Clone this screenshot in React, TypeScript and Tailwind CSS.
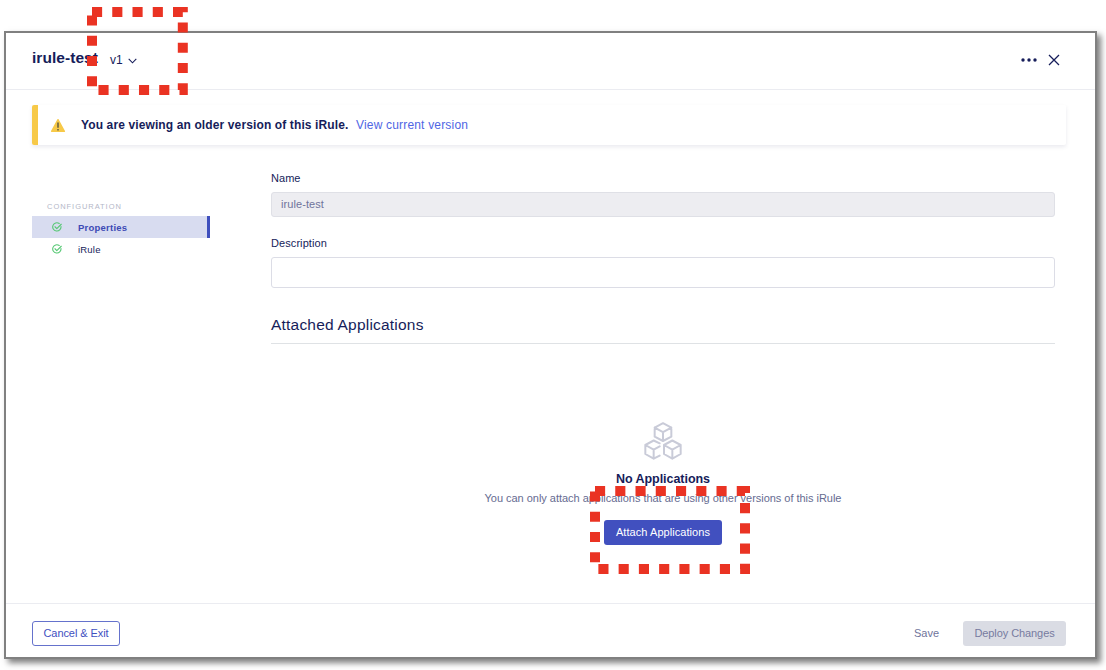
import React from "react";

function Callout({ className, width, height }: { className: string; width: number; height: number }) {
  return (
    <svg
      className={"pointer-events-none absolute " + className}
      width={width + 10}
      height={height + 10}
      fill="none"
    >
      <rect x="5" y="5" width={width} height={height} stroke="#ea3323" strokeWidth="10" strokeDasharray="10.125" />
    </svg>
  );
}

function CheckIcon() {
  return (
    <svg className="h-[10px] w-[10px] shrink-0" viewBox="0 0 20 20" fill="none" stroke="#55c873" strokeWidth="2.200">
      <path d="M18 9A8.300 8.300 0 1 1 14.500 3" strokeLinecap="round" />
      <path d="M6 9.500l3.600 3.700L18.500 4.500" strokeLinecap="round" strokeLinejoin="round" />
    </svg>
  );
}

function WarningIcon() {
  return (
    <svg className="mt-[1px] h-[15px] w-[16px]" viewBox="0 0 16 15">
      <path d="M8 1.700L14.400 13.300H1.600Z" fill="#f7c948" stroke="#f7c948" strokeWidth="1.400" strokeLinejoin="round" />
      <path d="M8 4.600v5.200M8 11v1.600" stroke="#4a4a3f" strokeWidth="1.300" />
    </svg>
  );
}

function CubesIcon() {
  return (
    <svg className="h-[38px] w-[38px]" viewBox="222 35 114 114" fill="none" stroke="#c9cbd8" strokeWidth="6" strokeLinejoin="round" strokeLinecap="round">
      <path d="M279 38.500L304 52V79L279 92L254 79V52ZM254 52L279 65.500L304 52M279 65.500V92" />
      <path d="M269 99L251 90.500L226 104V131L251 145L269 136M226 104L251 118L269 108M251 118V145" />
      <path d="M307 90.500L332 104V131L307 145L282 131V104ZM282 104L307 118L332 104M307 118V145" />
    </svg>
  );
}

export default function App() {
  return (
    <div className="relative h-[670px] w-[1106px] overflow-hidden bg-white pt-[31px] pl-1 font-['Liberation_Sans',Arial,sans-serif] text-[11px] text-[#161d5a]">
      <div className="flex h-[628px] w-[1093px] flex-col border-2 border-[#808080] bg-white shadow-[4px_4px_6px_rgba(0,0,0,0.5)]">
        <header className="flex h-[57px] shrink-0 items-center border-b border-[#ebecf1] pr-[35px] pb-[3px] pl-[26px]">
          <h1 className="mb-[4px] w-[67px] text-[15.500px] leading-5 font-bold tracking-[0.050px] whitespace-nowrap">irule-test</h1>
          <button className="ml-[11px] flex items-center gap-[5px] text-[12px] leading-4">
            <span>v1</span>
            <svg className="mt-[2px] h-[6px] w-[9px]" viewBox="0 0 9 6" fill="none" stroke="currentColor" strokeWidth="1.100">
              <path d="M0.700 0.900L4.500 4.800L8.300 0.900" />
            </svg>
          </button>
          <div className="ml-auto flex items-center gap-[11px]">
            <svg className="h-[4px] w-[16px]" viewBox="0 0 16 4" fill="currentColor">
              <circle cx="2" cy="2" r="1.700" />
              <circle cx="8" cy="2" r="1.700" />
              <circle cx="14" cy="2" r="1.700" />
            </svg>
            <svg className="h-[12px] w-[12px]" viewBox="0 0 12 12" fill="none" stroke="currentColor" strokeWidth="1.300">
              <path d="M1 1l10 10M11 1L1 11" />
            </svg>
          </div>
        </header>

        <div className="mt-[15px] mr-[29px] ml-[26px] flex h-[40px] shrink-0 items-center rounded-[2px] border-l-[6px] border-[#f7c948] pl-3 shadow-[0_2px_4px_rgba(20,25,80,0.09)]">
          <WarningIcon />
          <strong className="ml-[15px] w-[275px] text-[12px] leading-4 tracking-[0.120px] whitespace-nowrap">
            You are viewing an older version of this iRule.
          </strong>
          <a className="text-[12px] leading-4 tracking-[0.180px] whitespace-nowrap text-[#4f66e4]">View current version</a>
        </div>

        <main className="flex grow pr-[40px] pl-[26px]">
          <nav className="w-[178px] shrink-0 pt-[57px]">
            <div className="mb-[4px] pl-[15px] text-[7.500px] leading-[10px] font-medium tracking-[0.960px] text-[#b4b7c8]">CONFIGURATION</div>
            <div className="flex h-[22px] items-center border-r-[3px] border-[#3f4fbd] bg-[#d8dcf0] pl-[20px] text-[9.500px] font-bold text-[#3d4ab5]">
              <CheckIcon />
              <span className="ml-[16px] pt-[2px] tracking-[0.240px]">Properties</span>
            </div>
            <div className="flex h-[22px] items-center pl-[20px] text-[9.500px]">
              <CheckIcon />
              <span className="ml-[16px] pt-[2px] tracking-[0.200px]">iRule</span>
            </div>
          </nav>
          <section className="ml-[61px] flex grow flex-col pt-[25px]">
            <label className="leading-4 tracking-[0.040px]">Name</label>
            <div className="mt-[6px] flex h-[25px] items-center rounded-[3px] border border-[#dfe0e6] bg-[#ededf1] pl-[9px] tracking-[0.080px] text-[#6f749b]">
              irule-test
            </div>
            <label className="mt-[18px] leading-4 tracking-[0.080px]">Description</label>
            <div className="mt-[6px] h-[31px] rounded-[3px] border border-[#dcdde6]" />
            <h2 className="mt-[27px] border-b border-[#dfe2e5] pb-[8px] text-[15.500px] leading-5 tracking-[0.210px]">Attached Applications</h2>
            <div className="mt-[78px] flex flex-col items-center">
              <CubesIcon />
              <h3 className="mt-[11px] text-[12.500px] leading-4 font-bold tracking-[-0.050px]">No Applications</h3>
              <p className="mt-[3px] leading-4 tracking-[-0.030px] text-[#666b91]">
                You can only attach applications that are using other versions of this iRule
              </p>
              <button className="mt-[14px] h-[25px] w-[118px] rounded-[3px] bg-[#4150bf] tracking-[0.060px] text-white">Attach Applications</button>
            </div>
          </section>
        </main>

        <footer className="flex h-[54px] shrink-0 items-center border-t border-[#ebecf1] pt-[5px] pr-[29px] pl-[26px]">
          <button className="h-[25px] w-[88px] rounded-[3px] border border-[#6572cc] tracking-[-0.080px] text-[#4150bf]">Cancel &amp; Exit</button>
          <button className="ml-auto text-[#6f749b]">Save</button>
          <button className="ml-[24px] h-[25px] w-[103px] rounded-[3px] bg-[#dadce4] tracking-[-0.080px] text-[#777ba0]">Deploy Changes</button>
        </footer>
      </div>
      <Callout className="top-[7px] left-[87px]" width={90.8} height={78} />
      <Callout className="top-[486px] left-[590px]" width={150} height={78} />
    </div>
  );
}
